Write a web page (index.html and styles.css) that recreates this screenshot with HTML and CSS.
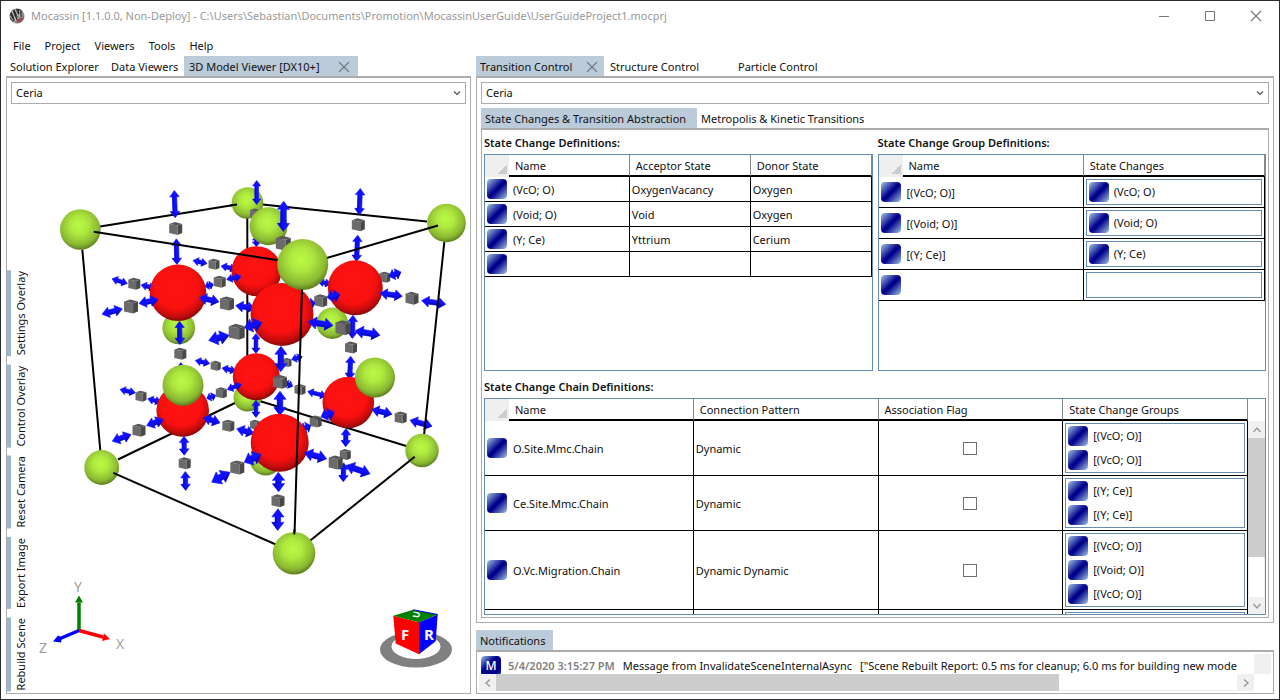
FILE: index.html
```html
<!DOCTYPE html>
<html lang="en">
<head>
<meta charset="utf-8">
<title>Mocassin</title>
<link rel="stylesheet" href="styles.css">
</head>
<body>
<svg class="defs" width="0" height="0" aria-hidden="true">
  <defs>
    <radialGradient id="green" cx=".47" cy=".4" r=".64">
      <stop offset="0" stop-color="#b9fa45"/><stop offset=".35" stop-color="#aee83f"/><stop offset=".75" stop-color="#8ab831"/><stop offset="1" stop-color="#4f6a1c"/>
    </radialGradient>
    <radialGradient id="red" cx=".47" cy=".4" r=".64">
      <stop offset="0" stop-color="#ff1414"/><stop offset=".6" stop-color="#fb1010"/><stop offset=".8" stop-color="#c80c0c"/><stop offset="1" stop-color="#700505"/>
    </radialGradient>
    <linearGradient id="logo" x1="0" x2="1" y1="0" y2="1">
      <stop offset="0" stop-color="#777"/><stop offset=".4" stop-color="#333"/><stop offset=".6" stop-color="#999"/><stop offset="1" stop-color="#7a3038"/>
    </linearGradient>
    <symbol id="chevron" viewBox="0 0 8 6"><path d="M1 1.500 4 4.500 7 1.500" fill="none" stroke="#555" stroke-width="1.200"/></symbol>
    <symbol id="cross" viewBox="0 0 12 12"><path d="M1 1 11 11M11 1 1 11" fill="none" stroke="currentColor" stroke-width="1.100"/></symbol>
    <symbol id="arrow" viewBox="0 0 10 10"><path d="M1.500 7 5 3 8.500 7" fill="none" stroke="#999" stroke-width="1.400"/></symbol>
  </defs>
</svg>
<div class="window">
  <header class="titlebar">
    <svg class="logo" viewBox="0 0 16 16" aria-hidden="true">
      <circle cx="8" cy="8" r="7.500" fill="url(#logo)"/>
      <path d="M3 3 7 13M6 1 9 8M10 2 11 9M1 8 4 12" stroke="#ccc" fill="none"/>
      <path d="M5 2 8 12M9 1 10 6M12 4 12 9M2 5 5 13" stroke="#222" fill="none"/>
      <path d="M7 14Q12 14 14 10L9 11Z" fill="#9c3f48"/>
    </svg>
    <h1>Mocassin [1.1.0.0, Non-Deploy] - C:\Users\Sebastian\Documents\Promotion\MocassinUserGuide\UserGuideProject1.mocprj</h1>
    <div class="winbuttons">
      <button type="button" aria-label="Minimize"><svg viewBox="0 0 12 12"><path d="M1 6.500H11" stroke="#777"/></svg></button>
      <button type="button" aria-label="Maximize"><svg viewBox="0 0 12 12"><path d="M1.500 1.500H10.500V10.500H1.500Z" fill="none" stroke="#777"/></svg></button>
      <button type="button" aria-label="Close"><svg viewBox="0 0 12 12"><use href="#cross"/></svg></button>
    </div>
  </header>
  <nav class="menu">
    <button type="button">File</button><button type="button">Project</button><button type="button">Viewers</button><button type="button">Tools</button><button type="button">Help</button>
  </nav>
  <main class="workspace">
    <section class="dock">
      <div class="tabs">
        <button type="button" class="tab lead">Solution Explorer</button>
        <button type="button" class="tab mid">Data Viewers</button>
        <div class="tab active viewer"><button type="button">3D Model Viewer [DX10+]</button><button type="button" class="close" aria-label="Close 3D Model Viewer"><svg viewBox="0 0 12 12"><use href="#cross"/></svg></button></div>
      </div>
      <div class="panel">
        <label class="combo"><select aria-label="Model"><option>Ceria</option></select><svg viewBox="0 0 8 6"><use href="#chevron"/></svg></label>
        <div class="stage">
          <svg class="scene" viewBox="7 105 463 588" role="img" aria-label="Ceria unit cell">
            <g id="cell"></g>
            <g class="axes">
              <path d="M79 631V603" stroke="#008000" stroke-width="3.500"/><path d="M79 596 83 603H75Z" fill="#008000"/>
              <path d="M79 631 103 637.500" stroke="#f00" stroke-width="3.500"/><path d="M110 639.500 102 641.500 104 634Z" fill="#f00"/>
              <path d="M79 631 59 639.500" stroke="#00f" stroke-width="3.500"/><path d="M53 642 58 636 62 638 61 643Z" fill="#00f"/>
              <text x="74" y="592">Y</text><text x="116" y="649">X</text><text x="39" y="653">Z</text>
            </g>
            <g class="navcube">
              <path fill-rule="evenodd" fill="#808080" d="M380 650a36 18 0 1 0 72 0a36 18 0 1 0-72 0ZM391.500 647a24.500 12.500 0 1 0 49 0a24.500 12.500 0 1 0-49 0Z"/>
              <path fill="#f00" d="M393.300 616.300 419 622.700V654.700L395.700 644Z"/>
              <path fill="#00f" d="M419 622.700 437.700 615 435.700 641.700 419 654.700Z"/>
              <path fill="#008000" d="M393.300 616.300 413.300 610.300 437.700 615 419 622.700Z"/>
              <path d="M413.300 610.300 437.700 615" stroke="#00f"/>
              <text x="401" y="640">F</text><text x="424" y="640">R</text>
              <text class="top" transform="translate(419 619) rotate(-80)">U</text>
            </g>
          </svg>
          <div class="overlay">
            <button type="button">Settings Overlay</button><button type="button">Control Overlay</button><button type="button">Reset Camera</button><button type="button">Export Image</button><button type="button">Rebuild Scene</button>
          </div>
        </div>
      </div>
    </section>
    <div class="right">
      <section class="dock grow">
        <div class="tabs">
          <div class="tab active control"><button type="button">Transition Control</button><button type="button" class="close" aria-label="Close Transition Control"><svg viewBox="0 0 12 12"><use href="#cross"/></svg></button></div>
          <button type="button" class="tab control">Structure Control</button>
          <button type="button" class="tab control">Particle Control</button>
        </div>
        <div class="panel">
          <label class="combo"><select aria-label="Transition model"><option>Ceria</option></select><svg viewBox="0 0 8 6"><use href="#chevron"/></svg></label>
          <div class="tabs inner">
            <button type="button" class="tab active abstraction">State Changes &amp; Transition Abstraction</button>
            <button type="button" class="tab">Metropolis &amp; Kinetic Transitions</button>
          </div>
          <div class="panel definitions">
            <h2 id="h-sc">State Change Definitions:</h2>
            <h2 id="h-sg">State Change Group Definitions:</h2>
            <div class="box">
              <table aria-labelledby="h-sc">
                <colgroup><col class="rowhead"><col><col><col></colgroup>
                <thead><tr><th class="corner"></th><th>Name</th><th>Acceptor State</th><th>Donor State</th></tr></thead>
                <tbody>
                  <tr><td><i class="gem"></i></td><td>(VcO; O)</td><td>OxygenVacancy</td><td>Oxygen</td></tr>
                  <tr><td><i class="gem"></i></td><td>(Void; O)</td><td>Void</td><td>Oxygen</td></tr>
                  <tr><td><i class="gem"></i></td><td>(Y; Ce)</td><td>Yttrium</td><td>Cerium</td></tr>
                  <tr><td><i class="gem"></i></td><td></td><td></td><td></td></tr>
                </tbody>
              </table>
            </div>
            <div class="box">
              <table class="groups" aria-labelledby="h-sg">
                <colgroup><col class="rowhead"><col><col></colgroup>
                <thead><tr><th class="corner"></th><th>Name</th><th>State Changes</th></tr></thead>
                <tbody>
                  <tr><td><i class="gem"></i></td><td>[(VcO; O)]</td><td class="nest"><ul><li><i class="gem"></i>(VcO; O)</li></ul></td></tr>
                  <tr><td><i class="gem"></i></td><td>[(Void; O)]</td><td class="nest"><ul><li><i class="gem"></i>(Void; O)</li></ul></td></tr>
                  <tr><td><i class="gem"></i></td><td>[(Y; Ce)]</td><td class="nest"><ul><li><i class="gem"></i>(Y; Ce)</li></ul></td></tr>
                  <tr><td><i class="gem"></i></td><td></td><td class="nest"><ul></ul></td></tr>
                </tbody>
              </table>
            </div>
            <h2 id="h-ch" class="wide low">State Change Chain Definitions:</h2>
            <div class="box wide">
              <table aria-labelledby="h-ch">
                <colgroup><col class="rowhead"><col><col><col><col></colgroup>
                <thead><tr><th class="corner"></th><th>Name</th><th>Connection Pattern</th><th>Association Flag</th><th>State Change Groups</th></tr></thead>
                <tbody>
                  <tr><td><i class="gem"></i></td><td>O.Site.Mmc.Chain</td><td>Dynamic</td><td class="flag"><input type="checkbox" aria-label="Association flag of O.Site.Mmc.Chain"></td><td class="nest"><ul><li><i class="gem"></i>[(VcO; O)]</li><li><i class="gem"></i>[(VcO; O)]</li></ul></td></tr>
                  <tr><td><i class="gem"></i></td><td>Ce.Site.Mmc.Chain</td><td>Dynamic</td><td class="flag"><input type="checkbox" aria-label="Association flag of Ce.Site.Mmc.Chain"></td><td class="nest"><ul><li><i class="gem"></i>[(Y; Ce)]</li><li><i class="gem"></i>[(Y; Ce)]</li></ul></td></tr>
                  <tr><td><i class="gem"></i></td><td>O.Vc.Migration.Chain</td><td>Dynamic Dynamic</td><td class="flag"><input type="checkbox" aria-label="Association flag of O.Vc.Migration.Chain"></td><td class="nest"><ul><li><i class="gem"></i>[(VcO; O)]</li><li><i class="gem"></i>[(Void; O)]</li><li><i class="gem"></i>[(VcO; O)]</li></ul></td></tr>
                  <tr><td></td><td></td><td></td><td></td><td class="nest"><ul></ul></td></tr>
                </tbody>
              </table>
              <div class="scroll">
                <button type="button" aria-label="Scroll up"><svg viewBox="0 0 10 10"><use href="#arrow"/></svg></button>
                <div class="track"><div class="thumb"></div></div>
                <button type="button" class="down" aria-label="Scroll down"><svg viewBox="0 0 10 10"><use href="#arrow"/></svg></button>
              </div>
            </div>
          </div>
        </div>
      </section>
      <section class="dock">
        <div class="tabs"><button type="button" class="tab active notes">Notifications</button></div>
        <div class="panel log">
          <div class="entry"><i class="gem">M</i><time>5/4/2020 3:15:27 PM</time><span>Message from InvalidateSceneInternalAsync</span><span>["Scene Rebuilt Report: 0.5 ms for cleanup; 6.0 ms for building new mode</span></div>
          <div class="gutter"></div>
          <div class="hscroll">
            <button type="button" class="left" aria-label="Scroll left"><svg viewBox="0 0 10 10"><use href="#arrow"/></svg></button>
            <div class="track"><div class="thumb"></div></div>
            <button type="button" class="rt" aria-label="Scroll right"><svg viewBox="0 0 10 10"><use href="#arrow"/></svg></button>
          </div>
        </div>
      </section>
    </div>
  </main>
</div>
<script src="scene.js"></script>
</body>
</html>
```
FILE: styles.css
```css
* { box-sizing: border-box; }
body { margin: 0; font: 11px/16px "Noto Sans", "Open Sans", sans-serif; color: #111; }
button { font: inherit; color: inherit; background: none; border: 0; padding: 0; margin: 0; text-align: left; white-space: nowrap; }
.defs { position: absolute; }

.window { height: 100vh; display: flex; flex-direction: column; background: #fff; border: 1px solid #2b2a2e; overflow: hidden; }
.titlebar { flex: none; display: flex; align-items: center; height: 30px; padding-left: 8px; color: #999; }
.logo { width: 16px; height: 16px; margin-right: 6px; }
h1 { flex: 1; margin: 0; font-size: 11px; font-weight: 400; white-space: nowrap; }
.winbuttons { display: flex; color: #777; }
.winbuttons button { width: 46px; height: 30px; display: grid; place-items: center; }
.winbuttons svg { width: 12px; height: 12px; }
.menu { flex: none; display: flex; gap: 14px; height: 25px; padding: 5px 0 0 12px; align-items: center; }

.workspace { flex: 1; min-height: 0; display: grid; grid-template-columns: 465fr 798fr; gap: 5px; padding: 0 5px 5px; }
.dock { display: flex; flex-direction: column; min-height: 0; min-width: 0; }
.right { display: flex; flex-direction: column; gap: 7px; min-height: 0; min-width: 0; }
.grow { flex: 1; }
.tabs { flex: none; display: flex; height: 20px; }
.tab { padding: 1px 4px 0; display: flex; align-items: center; white-space: nowrap; }
.active { background: #bccbda; }
.lead { width: 101px; }
.mid { width: 77px; }
.viewer { width: 174px; justify-content: space-between; padding: 1px 6px 0 5px; }
.control { width: 128px; justify-content: space-between; }
.control + .control { padding-left: 6px; }
.close { width: 14px; color: #6d7a86; }
.close svg { display: block; width: 12px; height: 12px; }
.abstraction { width: 216px; }
.notes { width: 77px; }
.panel { flex: 1; min-height: 0; display: flex; flex-direction: column; border: 1px solid #acacac; border-top-width: 2px; padding: 4px; }
.inner { margin-top: 4px; }

.combo { flex: none; display: grid; align-items: center; height: 22px; border: 1px solid #acacac; }
.combo > * { grid-area: 1 / 1; }
.combo select { appearance: none; width: 100%; height: 100%; border: 0; background: none; padding: 0 4px; font: inherit; color: inherit; }
.combo svg { width: 8px; height: 6px; justify-self: end; margin-right: 4px; pointer-events: none; }

.stage { flex: 1; min-height: 0; position: relative; margin: 0 -4px -4px; }
.scene { display: block; width: 100%; height: 100%; }
.axes text { font: 14px "Open Sans", sans-serif; fill: #999; }
.navcube text { font: 700 15px "Open Sans", sans-serif; fill: #fff; }
.navcube .top { font-size: 9px; }
.overlay { position: absolute; left: 0; bottom: 2px; display: flex; flex-direction: column; gap: 8px; }
.overlay button { writing-mode: vertical-rl; transform: rotate(180deg); border-right: 4px solid #9cb6d2; padding: 1px 2px; line-height: 16px; }

.definitions { display: grid; grid-template: 24px 1fr 27px 1fr / 1fr 1fr; column-gap: 5px; padding: 0 2px 2px; }
h2 { margin: 0; font-size: 11px; font-weight: 600; line-height: 26px; white-space: nowrap; }
h2.low { line-height: 32px; }
.wide { grid-column: 1 / -1; }
.box { display: flex; align-items: flex-start; min-height: 0; min-width: 0; overflow: hidden; border: 1px solid #688caf; }
table { flex: 1; table-layout: fixed; width: 100%; border-collapse: separate; border-spacing: 0; }
.rowhead { width: 24px; }
th { height: 22px; padding: 2px 6px 0; font-weight: 400; text-align: left; white-space: nowrap; border-bottom: 2px solid #000; border-right: 1px solid #888; }
th.corner { border: 0; background: linear-gradient(135deg, #efefef 50%, #ccc 50%) 12px 9px / 10px 10px no-repeat #efefef; }
td { height: 25px; padding: 1px 3px 0 2px; border-bottom: 1px solid #000; border-right: 1px solid #000; white-space: nowrap; }
td:first-child { padding: 0 2px; border-right: 0; }
td:nth-child(2) { padding-left: 4px; }
td.nest { padding: 2px; }
.gem { flex: none; display: block; width: 20px; height: 20px; border-radius: 4px; background: linear-gradient(135deg, #a4c8e6, #00008b 48%, #00008b 54%, #a4c8e6); }
ul { list-style: none; margin: 0; padding: 0 2px; min-height: 26px; border: 1px solid #688caf; }
li { display: flex; align-items: center; gap: 5px; height: 24px; }
.flag { text-align: center; }
input[type="checkbox"] { appearance: none; display: block; width: 14px; height: 13px; margin: 0 auto; border: 1px solid #707070; background: #fff; }

.scroll { flex: none; align-self: stretch; width: 17px; margin-top: 22px; display: flex; flex-direction: column; background: #fff; }
.scroll button, .hscroll button { flex: none; width: 17px; height: 17px; display: grid; place-items: center; background: #f0f0f0; }
.scroll svg, .hscroll svg { width: 10px; height: 10px; }
.down svg { transform: rotate(180deg); }
.left svg { transform: rotate(-90deg); }
.rt svg { transform: rotate(90deg); }
.track { flex: 1; border: 0 solid #eee; }
.scroll .track { border-width: 0 1px; }
.thumb { background: #cdcdcd; }
.scroll .thumb { height: 75%; margin: 0 -1px; }

.log { display: grid; grid-template: 20px 17px / minmax(0, 1fr) 17px; padding: 2px; }
.entry { display: flex; align-items: center; overflow: hidden; white-space: nowrap; padding: 4px 0 0 2px; }
.entry .gem { height: 20px; color: #fff; font: 600 12px/20px "Open Sans", sans-serif; text-align: center; background: linear-gradient(135deg, #a4c8e6, #00008b 40%, #00008b 80%, #3050a8); }
.entry time { margin: 0 8px 0 7px; font-weight: 600; color: #808080; }
.entry span { margin-right: 8px; }
.gutter { background: #f0f0f0; }
.hscroll { display: flex; }
.hscroll .track { border-width: 0 0 1px; }
.hscroll .thumb { width: 76%; height: 17px; }
```
FILE: scene.js
```js
// Unit cell drawn back to front.
// l: edge x1 y1 x2 y2, g/r: sphere x y radius, c: cube x y size, a: double arrow x1 y1 x2 y2 thickness
const items = `
l 247.3 215 247.3 392
l 100 227 237 205
l 260 204.700 427 222
l 118 460 238 402
l 258 401 407 446.700
l 82.300 250 100.500 453
g 247.500 203.500 15.800
l 230 206 237 205
a 256.700 181 256.700 205 3
c 255 214 10
a 256.500 236 256.500 247 3
g 247.500 398 14
g 268.500 226.700 19
a 193 261 207 264 3
a 221 266.500 236 269.500 3
c 214 264.700 11
c 384.700 277.700 11
a 389 277 401 272.500 4
g 332.300 323.700 15.800
g 178.700 328.500 16.300
a 256 334 256 354 3
r 256.500 271.700 25
a 205 287 213.300 284.700 3
c 219.700 282.300 12
a 226.700 280 241 276.700 3
a 195.300 361 209.700 364 3
c 215.700 366.300 10
a 222 368.500 236 371.500 3
c 287 363 9
a 291.700 360 302.300 357 3
r 256.300 377.300 23.500
a 256 400.700 256 418 3
c 255 425.300 10
a 206.700 399 215.700 395.700 3
c 221.300 393.300 11
a 227.300 390 241.300 384.700 3
a 284 383 292.700 386.700 3
c 300 390 11
a 307.700 392 326 396.500 3
a 318 282 331 284.500 3
a 112 279.300 127.300 284 3
c 134.300 284.300 12
a 141 285.500 155 288.500 3
a 120 390 135.300 393.300 3
c 141 396.700 11
a 147.700 399.300 161 402.500 3
a 176.300 239.300 177 265 3.500
a 174.300 191 175.300 218.300 3.500
c 175.700 229 13
r 178 293.300 28.300
a 179.500 321.700 180 345 3.500
c 180.300 354.300 12
a 180.800 363 180.800 377 3
r 182.700 411 26.300
g 183 385.700 20.500
a 139 304 158 300 4
c 131 307 14
a 102 314.700 122.300 309.300 4
a 199.300 298 219 302.300 4
c 227 304 14
a 235.700 306 255 309 4
a 146.700 426 163.300 420 4
c 139 430.700 13
a 112.300 441.700 131 435 4
a 203.300 418 220 423.300 4
c 228.300 426.300 12
a 236.700 429.300 254 434 4
a 184 436.700 184.300 455.700 3.500
c 184.700 463.700 12
a 185.300 472 185.700 491 3.500
a 360.300 189 359.300 215.300 3.500
c 358.300 225.300 13
a 357.700 235.700 356.500 262 3.500
r 355.300 288.300 27.500
a 353 315.700 352.300 339 3.500
c 351 348 12
a 350.700 356.700 349.700 380 3.500
r 348.300 403 25.800
g 375 378 20
a 346 429 345.700 447.300 3.500
c 345.300 455 11
a 343.700 463.300 343.300 482.300 3.500
a 321 417.300 334.300 412.700 4.500
c 315.700 422 12
a 301 430 310.700 426 4
a 371.700 410 392 414.700 4
c 400.700 418 12
a 410 420.700 432 426.700 4
a 327 298 340 295 4.500
c 320.700 301.300 13
a 306 305 315 303 4
a 380 293.700 402.300 296.700 4
c 412 298.700 13
a 421.700 301 445.700 304.700 4
a 283.700 201.700 283.300 232 4.500
c 283.300 243.700 15
g 265.700 460 16
r 282 315 31.500
a 281 346.700 280.700 372.300 4.500
c 280 382.300 14
a 280 391.700 280 416 4.500
r 279.700 443.300 29
a 244.300 328.300 262 323 5
c 236.700 332.300 16
a 208.700 341 229 335.700 5
a 308.300 322.300 333 326 4.500
c 343 328.300 15
a 355 331.300 380 335.700 4.500
a 244.300 462.700 261 455 5
c 237.300 468 14
a 211.700 482.700 230 472.700 5
a 304.300 453.300 326.700 459.300 4.500
c 335.700 463 14
a 346 466 370 474.300 4.500
a 278.300 472.700 278.700 492.300 4.500
c 278 501.300 13
a 278 509.300 277.700 531 4.500
g 80.300 230 20.300
g 446.500 223.500 19.300
l 444.300 242.700 424 436
g 101.700 468 17.400
g 422 451 16.700
l 93.700 232.300 280 261
l 325 259 438 226
l 113.300 473.300 277 545.500
l 309 542 414.700 457.300
g 302.700 265 25.500
l 302 290 294.500 535
g 294 553.700 21.300
l 294.400 530 294.300 535
`;

const NS = "http://www.w3.org/2000/svg";
const cell = document.getElementById("cell");

function add(name, attrs) {
  const node = document.createElementNS(NS, name);
  for (const key in attrs) node.setAttribute(key, attrs[key]);
  cell.appendChild(node);
}

function points(list) {
  return list.map(p => p.join(",")).join(" ");
}

function arrow(x1, y1, x2, y2, w) {
  const len = Math.hypot(x2 - x1, y2 - y1);
  const ux = (x2 - x1) / len, uy = (y2 - y1) / len;
  const head = Math.min(w * 1.8, len * 0.42), wing = w * 1.35, half = w * 0.62;
  const at = (along, side) => [x1 + ux * along - uy * side, y1 + uy * along + ux * side];
  const side = s => [at(0, 0), at(head, wing * s), at(head, half * s), at(len - head, half * s), at(len - head, wing * s), at(len, 0)];
  add("polygon", { points: points([...side(1), ...side(-1).reverse()]), fill: "#1010ff", stroke: "#1010ff", "stroke-width": 0.6, "stroke-linejoin": "round" });
  const dark = Math.abs(ux) > Math.abs(uy) ? Math.sign(ux) : 1;
  add("polygon", { points: points([at(head, half * dark), at(head, half * dark * 0.4), at(len - head, half * dark * 0.4), at(len - head, half * dark)]), fill: "#0a0ac4" });
  add("polygon", { points: points([at(len, 0), at(len - head, wing * dark), at(len - head, half * dark * 0.7)]), fill: "#0a0ac4" });
}

function cube(x, y, s) {
  const h = s / 2;
  const at = (dx, dy) => [x + dx * h, y + dy * h];
  add("polygon", { points: points([at(-1, -0.7), at(0.3, -0.45), at(0.3, 1), at(-1, 0.7)]), fill: "#6b6b6b" });
  add("polygon", { points: points([at(0.3, -0.45), at(1, -0.7), at(1, 0.7), at(0.3, 1)]), fill: "#484848" });
  add("polygon", { points: points([at(-1, -0.7), at(-0.1, -1), at(1, -0.7), at(0.3, -0.45)]), fill: "#595959" });
}

for (const line of items.trim().split("\n")) {
  const [kind, ...rest] = line.split(" ");
  const v = rest.map(Number);
  if (kind === "l") add("line", { x1: v[0], y1: v[1], x2: v[2], y2: v[3], stroke: "#000", "stroke-width": 2 });
  if (kind === "g") add("circle", { cx: v[0], cy: v[1], r: v[2], fill: "url(#green)" });
  if (kind === "r") add("circle", { cx: v[0], cy: v[1], r: v[2], fill: "url(#red)" });
  if (kind === "c") cube(...v);
  if (kind === "a") arrow(...v);
}
```
